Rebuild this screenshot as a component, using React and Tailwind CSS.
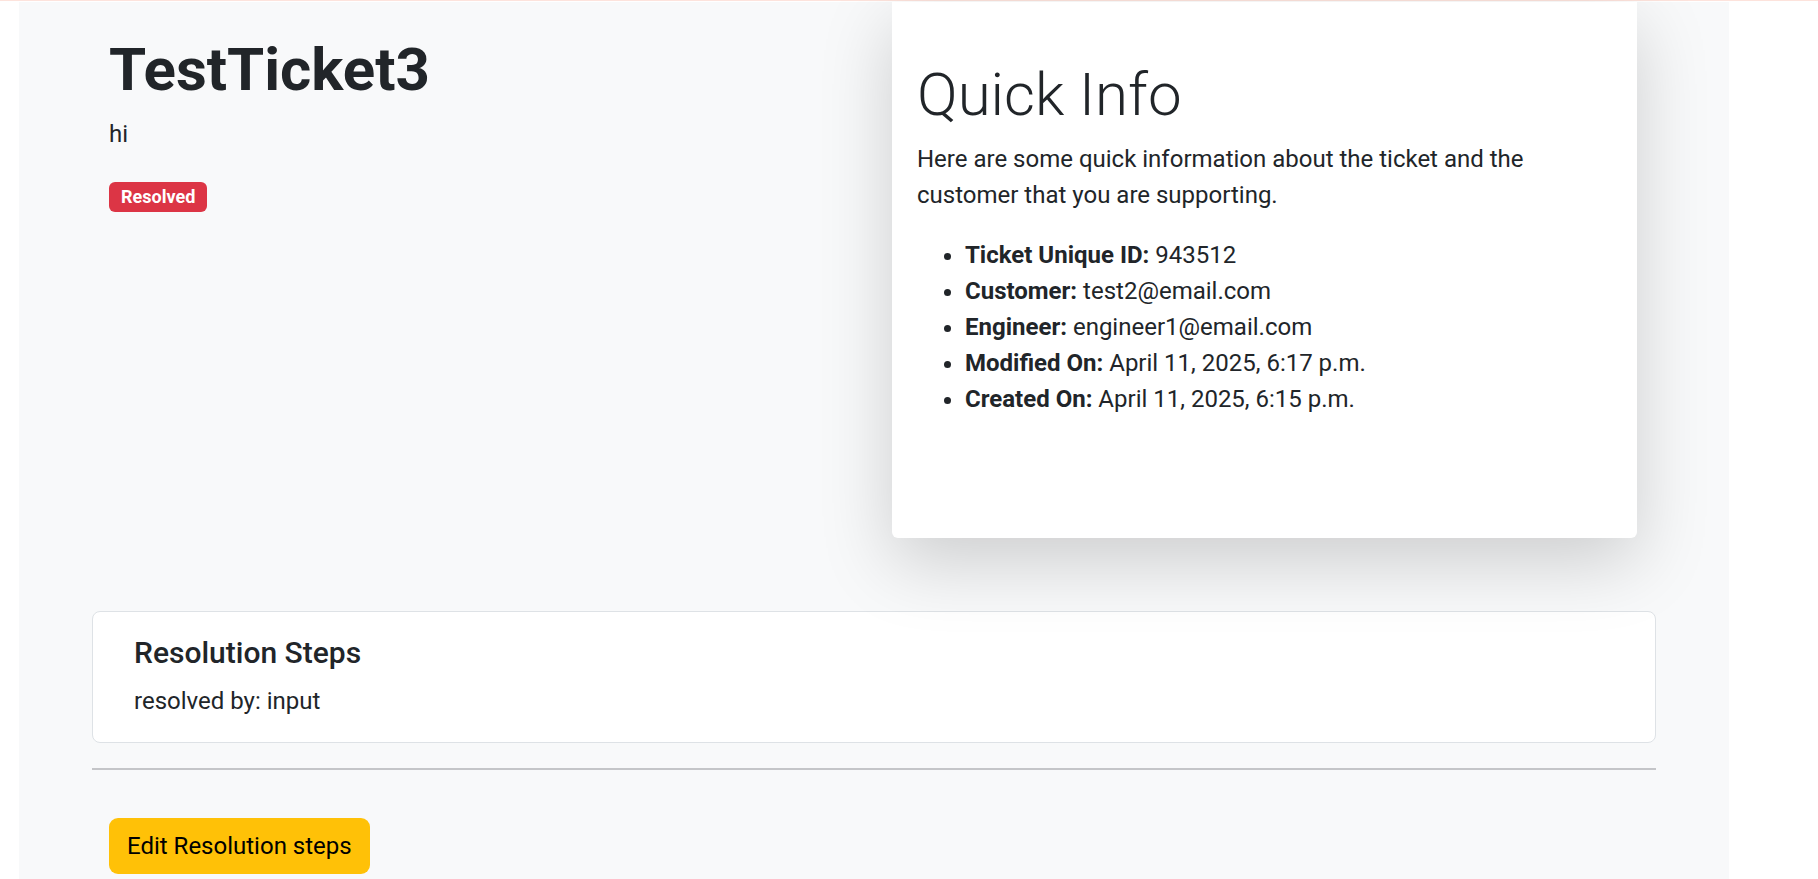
export default function App() {
  const info = [
    ["Ticket Unique ID:", "943512"],
    ["Customer:", "test2@email.com"],
    ["Engineer:", "engineer1@email.com"],
    ["Modified On:", "April 11, 2025, 6:17 p.m."],
    ["Created On:", "April 11, 2025, 6:15 p.m."],
  ];

  return (
    <div className="min-h-screen bg-white font-['Roboto',sans-serif] text-[#212529]">
      <div className="h-px bg-[#fde3dc]" />
      <div className="pl-[19px] pt-px">
        <div className="w-[1710px] min-h-[877px] bg-[#f8f9fa]">
          <div className="flex">
            {/* ticket header */}
            <div className="w-[855px] pl-[90px] pt-[32px]">
              <h1 className="text-[60px] font-bold leading-[72px] mb-[10px]">TestTicket3</h1>
              <p className="text-[24px] leading-[36px]">hi</p>
              <span className="mt-[30px] inline-flex h-[30px] items-center rounded-[6px] bg-[#dc3545] px-[12px] text-[18px] font-bold leading-none text-white">
                Resolved
              </span>
            </div>

            {/* quick info card */}
            <div className="ml-[18px] w-[745px] h-[536px] rounded-b-[6px] bg-white pl-[25px] pr-[25px] pt-[57px] shadow-[0_24px_72px_rgba(0,0,0,0.175)]">
              <h2 className="text-[60px] font-light leading-[72px] mb-[10px]">Quick Info</h2>
              <p className="text-[24px] leading-[36px] mb-[24px]">
                Here are some quick information about the ticket and the customer that you are supporting.
              </p>
              <ul className="list-disc pl-[48px] text-[24px] leading-[36px]">
                {info.map(([label, value]) => (
                  <li key={label}>
                    <strong className="font-bold">{label}</strong> {value}
                  </li>
                ))}
              </ul>
            </div>
          </div>

          {/* resolution steps */}
          <div className="mx-[73px] mt-[73px] rounded-[8px] border border-[#dee2e6] bg-white pl-[41px] pt-[23px] pb-[23px]">
            <h5 className="text-[30px] font-medium leading-[36px] mb-[12px]">Resolution Steps</h5>
            <p className="text-[24px] leading-[36px]">resolved by: input</p>
          </div>

          <div className="mx-[73px] mt-[25px] h-[2px] bg-[#c4c5c8]" />

          <button className="ml-[90px] mt-[48px] h-[56px] rounded-[9px] bg-[#ffc107] px-[18px] text-[24px] leading-[36px] text-black">
            Edit Resolution steps
          </button>
        </div>
      </div>
    </div>
  );
}
